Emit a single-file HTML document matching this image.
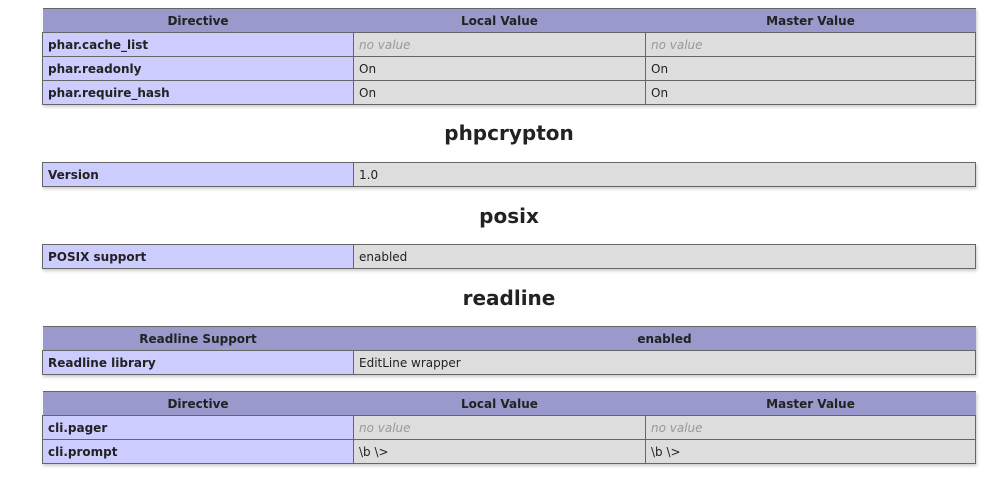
<!DOCTYPE html>
<html><head><meta charset="utf-8"><style>
body{margin:0;background:#fff;font-family:"DejaVu Sans","Liberation Sans",sans-serif;font-size:12px;color:#222;width:1007px;height:483px;overflow:hidden;position:relative}
table{position:absolute;left:42px;width:934px;border-collapse:collapse;table-layout:fixed;box-shadow:1px 2px 3px #ccc}
td,th{border:1px solid #666;height:23px;line-height:22px;padding:1px 0 0 5px;box-sizing:border-box;white-space:nowrap;overflow:hidden;vertical-align:middle}
th{background:#99c;font-weight:bold;text-align:center;padding:1px 0 0 0;border-left:none;border-right:none}
td.e{background:#ccf;font-weight:bold}
td.v{background:#ddd}
i{color:#999}
h2{position:absolute;left:0;width:1018px;margin:0;text-align:center;font-size:20px;font-weight:bold;line-height:24px}
</style></head><body>
<table style="top:8px"><colgroup><col style="width:311px"><col style="width:292px"><col></colgroup>
<tr><th>Directive</th><th>Local Value</th><th>Master Value</th></tr>
<tr><td class="e">phar.cache_list</td><td class="v"><i>no value</i></td><td class="v"><i>no value</i></td></tr>
<tr><td class="e">phar.readonly</td><td class="v">On</td><td class="v">On</td></tr>
<tr><td class="e">phar.require_hash</td><td class="v">On</td><td class="v">On</td></tr>
</table>
<h2 style="top:121px">phpcrypton</h2>
<table style="top:162px"><colgroup><col style="width:311px"><col></colgroup>
<tr><td class="e">Version</td><td class="v">1.0</td></tr></table>
<h2 style="top:204px">posix</h2>
<table style="top:244px"><colgroup><col style="width:311px"><col></colgroup>
<tr><td class="e">POSIX support</td><td class="v">enabled</td></tr></table>
<h2 style="top:286px">readline</h2>
<table style="top:326px"><colgroup><col style="width:311px"><col></colgroup>
<tr><th>Readline Support</th><th>enabled</th></tr>
<tr><td class="e">Readline library</td><td class="v">EditLine wrapper</td></tr></table>
<table style="top:391px"><colgroup><col style="width:311px"><col style="width:292px"><col></colgroup>
<tr><th>Directive</th><th>Local Value</th><th>Master Value</th></tr>
<tr><td class="e">cli.pager</td><td class="v"><i>no value</i></td><td class="v"><i>no value</i></td></tr>
<tr><td class="e">cli.prompt</td><td class="v">\b \&gt;</td><td class="v">\b \&gt;</td></tr>
</table>
</body></html>
